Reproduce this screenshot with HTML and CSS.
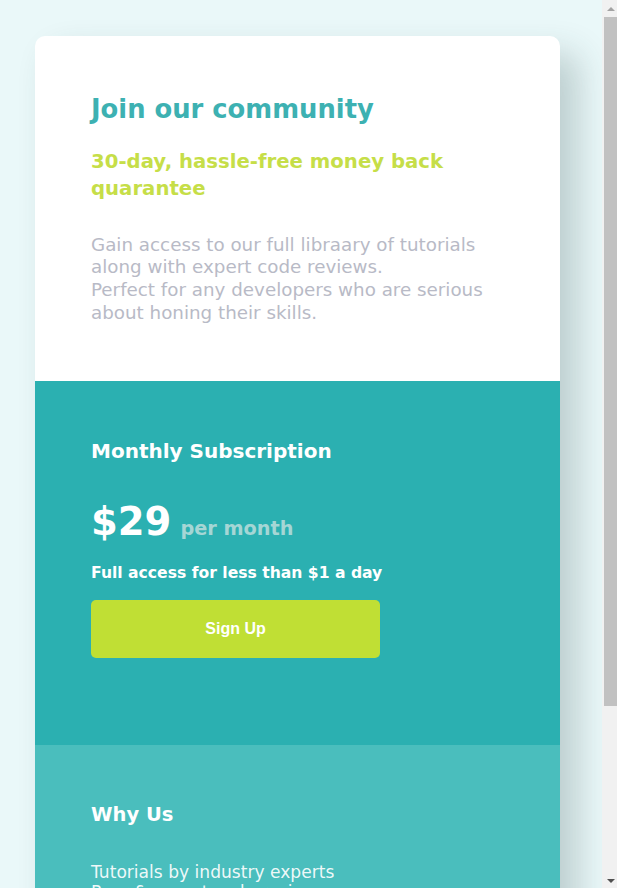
FILE: index.html
```html
<!DOCTYPE html>
<html lang="en">
<head>
<meta charset="utf-8">
<title>Single price grid</title>
<link rel="stylesheet" href="styles.css">
</head>
<body>
<main class="card">
  <section class="intro">
    <h1 class="intro-title">Join our community</h1>
    <h2 class="intro-sub">30-day, hassle-free money back quarantee</h2>
    <p class="intro-text">Gain access to our full libraary of tutorials<br>along with expert code reviews.<br>Perfect for any developers who are serious<br>about honing their skills.</p>
  </section>
  <section class="sub">
    <h3 class="sub-title">Monthly Subscription</h3>
    <div class="price">
      <span class="price-amount">$29</span>
      <span class="price-period">per month</span>
    </div>
    <p class="sub-note">Full access for less than $1 a day</p>
    <button class="signup" type="button">Sign Up</button>
  </section>
  <section class="why">
    <h3 class="why-title">Why Us</h3>
    <ul class="why-list">
      <li>Tutorials by industry experts</li>
      <li>Peer &amp; expert code review</li>
      <li>Coding exercises</li>
      <li>Access to member forums</li>
      <li>New content every month</li>
    </ul>
  </section>
</main>
<div class="scrollbar" aria-hidden="true">
  <div class="sb-btn sb-up"><span class="sb-arrow-up"></span></div>
  <div class="sb-thumb"></div>
  <div class="sb-track"></div>
  <div class="sb-btn sb-down"><span class="sb-arrow-down"></span></div>
</div>
</body>
</html>
```
FILE: styles.css
```css
* { box-sizing: border-box; }

body {
  margin: 0;
  padding: 36px 35px 48px;
  background: #eaf8f9;
  font-family: "DejaVu Sans", "Open Sans", sans-serif;
}

.card {
  width: 525px;
  border-radius: 10px;
  overflow: hidden;
  background: #ffffff;
  box-shadow: 18px 18px 34px rgba(40, 70, 72, 0.24);
}

.intro {
  padding: 56px 56px 57px;
}

.intro-title {
  margin: 0;
  font-size: 25.8px;
  line-height: 35px;
  font-weight: 700;
  color: #3db1b2;
}

.intro-sub {
  margin: 21px 0 0;
  font-size: 19.7px;
  line-height: 27px;
  font-weight: 700;
  color: #c6de48;
}

.intro-text {
  margin: 31.5px 0 0;
  font-size: 18.3px;
  line-height: 22.7px;
  font-weight: 400;
  color: #b8bac6;
}

.sub {
  background: #2bb0b1;
  color: #ffffff;
  padding: 56px 56px 87px;
}

.sub-title {
  margin: 0;
  font-size: 20px;
  line-height: 28px;
  font-weight: 700;
}

.price {
  margin-top: 34px;
  display: flex;
  align-items: baseline;
  gap: 9px;
}

.price-amount {
  font-size: 38.5px;
  line-height: 46px;
  font-weight: 700;
}

.price-period {
  font-size: 19.3px;
  line-height: 20px;
  font-weight: 700;
  color: #a5d6d5;
}

.sub-note {
  margin: 17px 0 0;
  font-size: 15.6px;
  line-height: 22px;
  font-weight: 700;
}

.signup {
  display: block;
  margin-top: 16px;
  width: 289px;
  height: 58px;
  border: 0;
  border-radius: 5px;
  background: #c0df34;
  color: #ffffff;
  font-family: "Liberation Sans", Arial, sans-serif;
  font-size: 16px;
  font-weight: 700;
  cursor: pointer;
}

.why {
  background: #4abebd;
  color: #ffffff;
  padding: 56px 56px 56px;
}

.why-title {
  margin: 0;
  font-size: 19.5px;
  line-height: 28px;
  font-weight: 700;
}

.why-list {
  margin: 34px 0 0;
  padding: 0;
  list-style: none;
  font-size: 17.1px;
  line-height: 19.5px;
  color: rgba(255, 255, 255, 0.92);
}

/* window scrollbar, drawn over the page edge */
.scrollbar {
  position: fixed;
  top: 0;
  right: 0;
  width: 15px;
  height: 100vh;
  display: flex;
  flex-direction: column;
  background: #f1f1f1;
}

.sb-btn {
  flex: 0 0 17px;
  display: flex;
  align-items: center;
  justify-content: center;
  padding-left: 3px;
}

.sb-thumb {
  flex: 0 0 689px;
  margin-left: 2px;
  background: #c1c1c1;
}

.sb-track {
  flex: 1 1 auto;
}

.sb-arrow-up {
  width: 0;
  height: 0;
  border-left: 4.5px solid transparent;
  border-right: 4.5px solid transparent;
  border-bottom: 4.5px solid #a3a3a3;
}

.sb-arrow-down {
  width: 0;
  height: 0;
  margin-top: 2px;
  border-left: 4.5px solid transparent;
  border-right: 4.5px solid transparent;
  border-top: 4.5px solid #505050;
}
```
